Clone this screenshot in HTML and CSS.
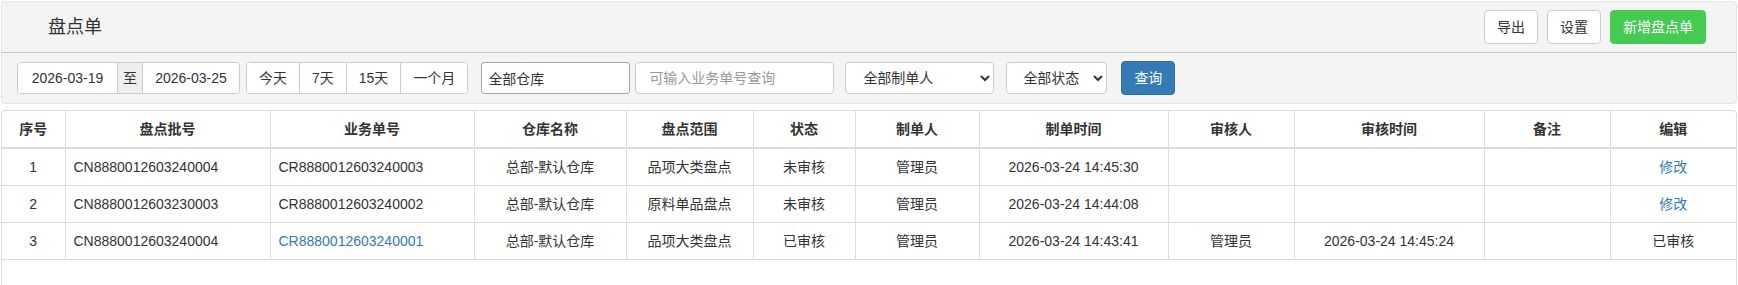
FILE: index.html
```html
<!DOCTYPE html>
<html>
  <head>
    <meta charset="utf-8">
    <title>盘点单</title>
    <link rel="stylesheet" href="styles.css">
  </head>
  <body>
    <div class="page">
      <div class="top-panel">
        <div class="panel-head">
          <h1 class="page-title">盘点单</h1>
          <div class="head-actions">
            <button class="btn btn-default">导出</button>
            <button class="btn btn-default">设置</button>
            <button class="btn btn-success">新增盘点单</button>
          </div>
        </div>

        <div class="filter-bar">
          <div class="date-group">
            <input class="date-input date-from" type="text" value="2026-03-19">
            <span class="date-addon">至</span>
            <input class="date-input date-to" type="text" value="2026-03-25">
          </div>

          <div class="quick-group">
            <button class="quick-btn">今天</button>
            <button class="quick-btn">7天</button>
            <button class="quick-btn">15天</button>
            <button class="quick-btn">一个月</button>
          </div>

          <input class="field warehouse-input" type="text" value="全部仓库">
          <input class="field search-input" type="text" placeholder="可输入业务单号查询">

          <select class="field select-maker">
            <option>全部制单人</option>
            <option>管理员</option>
          </select>
          <select class="field select-status">
            <option>全部状态</option>
            <option>未审核</option>
            <option>已审核</option>
          </select>

          <button class="btn btn-primary btn-query">查询</button>
        </div>
      </div>

      <div class="table-panel">
        <table class="data-table">
          <colgroup>
            <col class="c-no">
            <col class="c-batch">
            <col class="c-bill">
            <col class="c-wh">
            <col class="c-range">
            <col class="c-state">
            <col class="c-maker">
            <col class="c-mtime">
            <col class="c-audit">
            <col class="c-atime">
            <col class="c-note">
            <col class="c-edit">
          </colgroup>
          <thead>
            <tr>
              <th>序号</th>
              <th>盘点批号</th>
              <th>业务单号</th>
              <th>仓库名称</th>
              <th>盘点范围</th>
              <th>状态</th>
              <th>制单人</th>
              <th>制单时间</th>
              <th>审核人</th>
              <th>审核时间</th>
              <th>备注</th>
              <th>编辑</th>
            </tr>
          </thead>
          <tbody>
            <tr>
              <td>1</td>
              <td class="left">CN8880012603240004</td>
              <td class="left">CR8880012603240003</td>
              <td>总部-默认仓库</td>
              <td>品项大类盘点</td>
              <td>未审核</td>
              <td>管理员</td>
              <td>2026-03-24 14:45:30</td>
              <td></td>
              <td></td>
              <td></td>
              <td><a href="#">修改</a></td>
            </tr>
            <tr>
              <td>2</td>
              <td class="left">CN8880012603230003</td>
              <td class="left">CR8880012603240002</td>
              <td>总部-默认仓库</td>
              <td>原料单品盘点</td>
              <td>未审核</td>
              <td>管理员</td>
              <td>2026-03-24 14:44:08</td>
              <td></td>
              <td></td>
              <td></td>
              <td><a href="#">修改</a></td>
            </tr>
            <tr>
              <td>3</td>
              <td class="left">CN8880012603240004</td>
              <td class="left"><a href="#">CR8880012603240001</a></td>
              <td>总部-默认仓库</td>
              <td>品项大类盘点</td>
              <td>已审核</td>
              <td>管理员</td>
              <td>2026-03-24 14:43:41</td>
              <td>管理员</td>
              <td>2026-03-24 14:45:24</td>
              <td></td>
              <td>已审核</td>
            </tr>
          </tbody>
        </table>
      </div>
    </div>
  </body>
</html>
```

FILE: styles.css
```css
* { box-sizing: border-box; }
body {
  margin: 0;
  font-family: "Liberation Sans", "Noto Sans CJK SC", sans-serif;
  font-size: 14px;
  line-height: 20px;
  color: #333;
  background: #fff;
}
.page { padding: 1px 1px 0 1px; }

/* top panel */
.top-panel {
  background: #f4f4f4;
  border: 1px solid #e4e4e4;
  border-radius: 4px;
}
.panel-head {
  height: 51px;
  display: flex;
  align-items: center;
  justify-content: space-between;
  padding: 0 30px 0 46px;
  border-bottom: 1px solid #c6c6c6;
}
.page-title { margin: 0; font-size: 18px; font-weight: normal; color: #333; }
.head-actions { display: flex; gap: 9px; }

.btn {
  height: 34px;
  padding: 0 12px;
  font: inherit;
  border: 1px solid #ccc;
  border-radius: 4px;
  background: #fff;
  color: #333;
  cursor: pointer;
}
.btn-success { background: #45ca54; border-color: #45ca54; color: #fff; }
.btn-primary { background: #337ab7; border-color: #2e6da4; color: #fff; }

.filter-bar {
  height: 50px;
  display: flex;
  align-items: center;
  padding-left: 15px;
}
.date-group {
  display: flex;
  height: 32px;
  border: 1px solid #ccc;
  border-radius: 4px;
  background: #fff;
  overflow: hidden;
}
.date-input {
  border: 0;
  padding: 0;
  font: inherit;
  color: #333;
  text-align: center;
  background: #fff;
}
.date-from { width: 99px; }
.date-to { width: 97px; border-left: 1px solid #ccc; }
.date-addon {
  width: 25px;
  border-left: 1px solid #ccc;
  background: #eee;
  text-align: center;
  line-height: 30px;
}

.quick-group {
  display: flex;
  height: 32px;
  margin-left: 6px;
  border: 1px solid #ccc;
  border-radius: 4px;
  background: #fff;
  overflow: hidden;
}
.quick-btn {
  padding: 0 12px;
  border: 0;
  border-left: 1px solid #ccc;
  background: #fff;
  font: inherit;
  color: #333;
}
.quick-btn:first-child { border-left: 0; }

.field {
  height: 32px;
  font: inherit;
  color: #333;
  background: #fff;
  border: 1px solid #ccc;
  border-radius: 4px;
}
.warehouse-input { width: 149px; margin-left: 13px; padding: 0 6px; border-color: #a6a6a6; border-radius: 3px; }
.search-input { width: 199px; margin-left: 5px; padding: 0 13px; }
.search-input::placeholder { color: #999; }
.select-maker { width: 149px; margin-left: 11px; padding-left: 13px; }
.select-status { width: 101px; margin-left: 12px; padding-left: 12px; }
.btn-query { width: 54px; margin-left: 14px; padding: 0; }

/* table */
.table-panel {
  margin-top: 6px;
  height: 190px;
  border: 1px solid #ddd;
  border-radius: 4px;
  background: #fff;
}
.data-table {
  width: 100%;
  table-layout: fixed;
  border-collapse: collapse;
}
.c-no { width: 63px; }
.c-batch { width: 205px; }
.c-bill { width: 204px; }
.c-wh { width: 152px; }
.c-range { width: 127px; }
.c-state { width: 102px; }
.c-maker { width: 124px; }
.c-mtime { width: 189px; }
.c-audit { width: 126px; }
.c-atime { width: 190px; }
.c-note { width: 126px; }
.c-edit { width: 126px; }

.data-table th,
.data-table td {
  padding: 8px;
  text-align: center;
  white-space: nowrap;
  border-left: 1px solid #ddd;
}
.data-table th:first-child,
.data-table td:first-child { border-left: 0; }
.data-table th { font-weight: bold; border-bottom: 2px solid #ddd; }
.data-table td { border-bottom: 1px solid #ddd; }
.data-table td.left { text-align: left; }
.data-table a { color: #337ab7; text-decoration: none; }
```
